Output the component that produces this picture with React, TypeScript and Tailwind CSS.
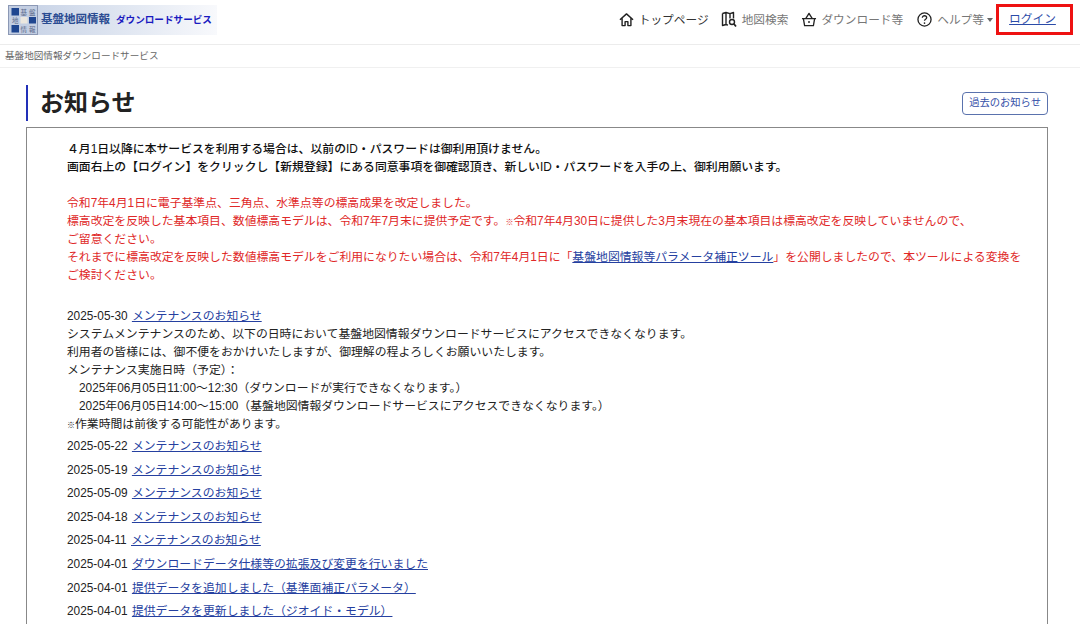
const font = "font-['Liberation_Sans','Noto_Sans_CJK_JP',sans-serif]";

const news = [
  { date: "2025-05-22", title: "メンテナンスのお知らせ" },
  { date: "2025-05-19", title: "メンテナンスのお知らせ" },
  { date: "2025-05-09", title: "メンテナンスのお知らせ" },
  { date: "2025-04-18", title: "メンテナンスのお知らせ" },
  { date: "2025-04-11", title: "メンテナンスのお知らせ" },
  { date: "2025-04-01", title: "ダウンロードデータ仕様等の拡張及び変更を行いました" },
  { date: "2025-04-01", title: "提供データを追加しました（基準面補正パラメータ）" },
  { date: "2025-04-01", title: "提供データを更新しました（ジオイド・モデル）" },
];

function Logo() {
  return (
    <div className="flex h-[30px] w-[209px] items-center bg-gradient-to-r from-[#c3cfe4] via-[#dde4f0] to-[#f8f9fc] whitespace-nowrap">
      <svg width="30" height="30" viewBox="0 0 30 30" className="shrink-0">
        <rect x="0.5" y="0.5" width="29" height="29" fill="#c3cee2" stroke="#8b98b5" />
        <rect x="3.5" y="3" width="7.5" height="7.5" fill="#1f4690" />
        <rect x="21" y="12" width="7" height="6.5" fill="#1f4690" />
        <rect x="3.5" y="20" width="7.5" height="7.5" fill="#1f4690" />
        <rect x="12.5" y="12" width="7" height="6.5" fill="#ebe7df" />
        <g fontSize="6.5" fill="#5a6a8c">
          <text x="12.5" y="9.5">基</text>
          <text x="21" y="9.5">盤</text>
          <text x="4" y="18">地</text>
          <text x="12.5" y="26.5">情</text>
          <text x="21" y="26.5">報</text>
        </g>
      </svg>
      <span className="ml-[3px] text-[11.5px] font-bold text-[#2b4c92]">基盤地図情報</span>
      <span className="ml-[6px] text-[9.6px] font-bold text-[#1a1ac0]">ダウンロードサービス</span>
    </div>
  );
}

function HomeIcon() {
  return (
    <svg width="15" height="15" viewBox="0 0 16 16" fill="none" stroke="#222" strokeWidth="1.5">
      <path d="M1 8.2 8 2l7 6.2M3.3 6.5V14.5h3.2v-4.2h3v4.2h3.2V6.5" strokeLinejoin="round" />
    </svg>
  );
}

function MapIcon() {
  return (
    <svg width="16" height="17" viewBox="0 0 16 17" fill="none" stroke="#222" strokeWidth="1.4">
      <path d="M1.5 2.5 5 1.5l4 1.2 3.5-1.2v6M1.5 2.5V14.5L5 13.5l2 .6M5 1.5v12M9 2.7V7.5" strokeLinejoin="round" />
      <circle cx="11" cy="11" r="2.5" />
      <path d="m13 13 2 2.5" strokeWidth="1.8" />
    </svg>
  );
}

function BasketIcon() {
  return (
    <svg width="16" height="15" viewBox="0 0 17 16" fill="none" stroke="#222" strokeWidth="1.4">
      <path d="M1 7h15M2.5 7l1.3 7.5h9.4L14.500 7M5 7l3.5-5.500L12 7" strokeLinejoin="round" />
      <circle cx="8.5" cy="10.700" r="1" fill="#222" stroke="none" />
    </svg>
  );
}

function HelpIcon() {
  return (
    <svg width="15" height="15" viewBox="0 0 16 16" fill="none" stroke="#222" strokeWidth="1.4">
      <circle cx="8" cy="8" r="7" />
      <path d="M5.700 6.200c0-1.400 1.100-2.200 2.300-2.200s2.300.8 2.300 2c0 1.700-2.300 1.700-2.300 3.400" />
      <circle cx="8" cy="11.800" r="0.9" fill="#222" stroke="none" />
    </svg>
  );
}

function Header() {
  return (
    <header className="flex h-[45px] items-center justify-between border-b border-[#ececec] pb-[4px] pl-[8px] pr-[7px]">
      <Logo />
      <nav className="flex items-center text-[11.7px]">
        <span className="flex items-center gap-[5px] text-[#333]">
          <HomeIcon />
          トップページ
        </span>
        <span className="ml-[12px] flex items-center gap-[5px] text-[#777]">
          <MapIcon />
          地図検索
        </span>
        <span className="ml-[13px] flex items-center gap-[4px] text-[#777]">
          <BasketIcon />
          ダウンロード等
        </span>
        <span className="ml-[14px] flex items-center gap-[5px] text-[#777]">
          <HelpIcon />
          ヘルプ等
          <svg width="6" height="4" viewBox="0 0 6 4" className="-ml-[2px]">
            <path d="M0 0h6L3 4z" fill="#666" />
          </svg>
        </span>
        <a href="#" className="mb-[2px] ml-[3px] flex h-[31px] w-[77px] items-center justify-center border-[3px] border-[#ee1111] pr-[4px] text-[#2b4ba8] underline">
          ログイン
        </a>
      </nav>
    </header>
  );
}

export default function App() {
  return (
    <div className={`${font} h-[624px] w-[1080px] overflow-hidden bg-white text-[#222]`}>
      <Header />
      <div className="flex h-[23px] items-center border-b border-[#f0f0f0] pl-[5px] text-[9.6px] text-[#666]">
        基盤地図情報ダウンロードサービス
      </div>
      <main className="pl-[26px] pr-[32px] pt-[17px]">
        <div className="flex items-center justify-between">
          <h1 className="flex h-[36px] items-center border-l-2 border-[#2230b8] pl-[12px] text-[24px] font-bold text-[#222]">
            お知らせ
          </h1>
          <button className="h-[23px] rounded-[4px] border border-[#5a72ad] px-[6px] text-[10.3px] text-[#3550a8]">
            過去のお知らせ
          </button>
        </div>
        <section className="mt-[6px] border border-[#888] pb-[40px] pl-[40px] pr-[20px] pt-[12px] text-[11.85px] leading-[18px]">
          <p className="font-medium text-[#111]">４月1日以降に本サービスを利用する場合は、以前のID・パスワードは御利用頂けません。</p>
          <p className="font-medium text-[#111]">画面右上の【ログイン】をクリックし【新規登録】にある同意事項を御確認頂き、新しいID・パスワードを入手の上、御利用願います。</p>
          <div className="mt-[18px] text-[#e02828]">
            <p>令和7年4月1日に電子基準点、三角点、水準点等の標高成果を改定しました。</p>
            <p>標高改定を反映した基本項目、数値標高モデルは、令和7年7月末に提供予定です。<span className="text-[8px] leading-none">※</span>令和7年4月30日に提供した3月末現在の基本項目は標高改定を反映していませんので、</p>
            <p>ご留意ください。</p>
            <p>それまでに標高改定を反映した数値標高モデルをご利用になりたい場合は、令和7年4月1日に「<a href="#" className="text-[#2540a0] underline">基盤地図情報等パラメータ補正ツール</a>」を公開しましたので、本ツールによる変換を</p>
            <p>ご検討ください。</p>
          </div>
          <div className="mt-[23px]">
            <p>2025-05-30 <a href="#" className="ml-[1px] text-[#2540a0] underline">メンテナンスのお知らせ</a></p>
            <p>システムメンテナンスのため、以下の日時において基盤地図情報ダウンロードサービスにアクセスできなくなります。</p>
            <p>利用者の皆様には、御不便をおかけいたしますが、御理解の程よろしくお願いいたします。</p>
            <p>メンテナンス実施日時（予定）：</p>
            <p className="pl-[12px]">2025年06月05日11:00～12:30（ダウンロードが実行できなくなります。）</p>
            <p className="pl-[12px]">2025年06月05日14:00～15:00（基盤地図情報ダウンロードサービスにアクセスできなくなります。）</p>
            <p><span className="text-[8px] leading-none">※</span>作業時間は前後する可能性があります。</p>
          </div>
          <ul className="mt-[4px] flex flex-col gap-[5.6px]">
            {news.map((n, i) => (
              <li key={i}>
                {n.date} <a href="#" className="ml-[1px] text-[#2540a0] underline">{n.title}</a>
              </li>
            ))}
          </ul>
        </section>
      </main>
    </div>
  );
}
